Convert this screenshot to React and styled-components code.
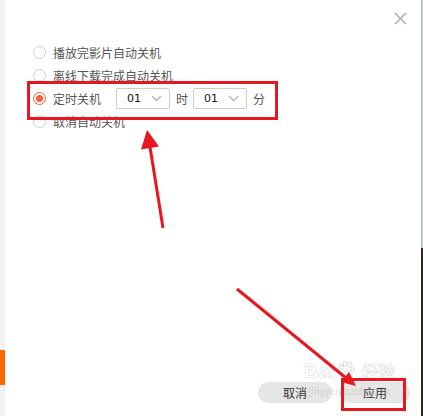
import styled, { createGlobalStyle } from 'styled-components';

const GlobalStyle = createGlobalStyle`
    html, body {
        margin: 0;
        padding: 0;
        background: #fff;
    }
    body {
        font-family: "Noto Sans CJK SC", "Liberation Sans", sans-serif;
        font-size: 12px;
    }
`;

const options = [
    { id: 'movie', label: '播放完影片自动关机' },
    { id: 'download', label: '离线下载完成自动关机' },
    { id: 'timer', label: '定时关机', checked: true, timer: true },
    { id: 'cancel', label: '取消自动关机' },
];

const Chevron = () => (
    <svg width="11" height="7" viewBox="0 0 11 7">
        <path d="M1 1l4.5 4.5L10 1" fill="none" stroke="#b4b4b4" strokeWidth="1.4" />
    </svg>
);

const TimeSelect = ({ value }) => (
    <Select>
        <span>{value}</span>
        <Chevron />
    </Select>
);

// faint baidu paw in the watermark
const Paw = () => (
    <svg width="18" height="20" viewBox="0 0 18 20">
        <g fill="none" stroke="rgba(150,150,150,0.35)" strokeWidth="1">
            <ellipse cx="4" cy="6" rx="2" ry="2.6" />
            <ellipse cx="8" cy="3" rx="2" ry="2.6" />
            <ellipse cx="13" cy="4" rx="2" ry="2.6" />
            <ellipse cx="15.5" cy="9" rx="1.8" ry="2.3" />
            <path d="M4 17c0-4 3-7 5.5-7S15 13 15 17c0 2-3 2-5.5 1.2C7 19 4 19 4 17z" />
        </g>
    </svg>
);

const App = () => (
    <Page>
        <GlobalStyle />
        <Sidebar>
            <SideTab />
        </Sidebar>
        <Dialog>
            <Header>
                <CloseButton aria-label="close">
                    <svg width="13" height="13" viewBox="0 0 13 13">
                        <path d="M1 1l11 11M12 1L1 12" stroke="#b0b0b0" strokeWidth="1.6" />
                    </svg>
                </CloseButton>
            </Header>
            <OptionList>
                {options.map((opt) => (
                    <Option key={opt.id}>
                        <Radio $checked={opt.checked} />
                        <Label>{opt.label}</Label>
                        {opt.timer && (
                            <TimerFields>
                                <TimeSelect value="01" />
                                <Unit>时</Unit>
                                <TimeSelect value="01" />
                                <Unit>分</Unit>
                            </TimerFields>
                        )}
                    </Option>
                ))}
            </OptionList>
            <Footer>
                <Button $w={74}>取消</Button>
                <Button $w={70}>应用</Button>
            </Footer>
        </Dialog>
        <EdgeStrip />

        <Watermark>
            <div className="brand">
                <span>Bai</span>
                <Paw />
                <span className="cn">经验</span>
            </div>
            <span className="url">jingyan.baidu.com</span>
        </Watermark>
        <MarkBox $x={27} $y={81} $w={251} $h={39} />
        <MarkBox $x={341} $y={378} $w={65} $h={33} />
        <ArrowLayer width="423" height="416" viewBox="0 0 423 416">
            <line x1="163" y1="228" x2="150" y2="147" stroke="#e8161f" strokeWidth="3" />
            <polygon points="147,130 141,149.5 159,146.5" fill="#e8161f" />
            <line x1="237" y1="289" x2="346" y2="378" stroke="#e8161f" strokeWidth="3" />
            <polygon points="356,386 341,382 349,372" fill="#e8161f" />
        </ArrowLayer>
    </Page>
);

export default App;

const Page = styled.div`
    position: relative;
    width: 423px;
    height: 416px;
    display: flex;
    overflow: hidden;
    background: #fff;
`;

const Sidebar = styled.div`
    width: 5px;
    background: #f2f2f2;
    display: flex;
    flex-direction: column;
    justify-content: flex-end;
    padding-bottom: 31px;
    box-sizing: border-box;
`;

const SideTab = styled.div`
    height: 35px;
    background: #ff6600;
`;

const EdgeStrip = styled.div`
    width: 2px;
    background: linear-gradient(#b9c6c2 0, #b9c6c2 248px, #2b2620 248px);
`;

const Dialog = styled.div`
    flex: 1;
    display: flex;
    flex-direction: column;
`;

const Header = styled.div`
    height: 40px;
    display: flex;
    justify-content: flex-end;
    padding: 11px 13px 0 0;
    box-sizing: border-box;
`;

const CloseButton = styled.button`
    width: 15px;
    height: 15px;
    padding: 0;
    border: none;
    background: none;
    display: flex;
    align-items: center;
    justify-content: center;
`;

const OptionList = styled.div`
    display: flex;
    flex-direction: column;
    padding-left: 28px;
    padding-top: 1px;
`;

const Option = styled.div`
    height: 23px;
    display: flex;
    align-items: center;
`;

const Radio = styled.span`
    width: 13px;
    height: 13px;
    box-sizing: border-box;
    border-radius: 50%;
    border: 1px solid ${(p) => (p.$checked ? '#f0603f' : '#cfcfcf')};
    display: flex;
    align-items: center;
    justify-content: center;
    margin-right: 7px;
    &::after {
        content: '';
        width: 7px;
        height: 7px;
        border-radius: 50%;
        background: #f0603f;
        display: ${(p) => (p.$checked ? 'block' : 'none')};
    }
`;

const Label = styled.span`
    color: #555;
    font-size: 12px;
    line-height: 16px;
`;

const TimerFields = styled.div`
    display: flex;
    align-items: center;
    margin-left: 15px;
`;

const Select = styled.div`
    width: 54px;
    height: 21px;
    box-sizing: border-box;
    border: 1px solid #cccccc;
    border-radius: 2px;
    display: flex;
    align-items: center;
    justify-content: space-between;
    padding: 0 7px 0 10px;
    span {
        font-family: "DejaVu Sans", sans-serif;
        font-size: 11px;
        color: #111;
    }
`;

const Unit = styled.span`
    color: #555;
    font-size: 12px;
    margin: 0 5px 0 6px;
`;

const Footer = styled.div`
    margin-top: auto;
    display: flex;
    justify-content: flex-end;
    gap: 8px;
    padding: 0 11px 13px 0;
`;

const Button = styled.button`
    width: ${(p) => p.$w}px;
    height: 21px;
    border: none;
    border-radius: 11px;
    background: #e6e6e6;
    color: #333;
    font-family: "Noto Sans CJK SC", sans-serif;
    font-size: 12px;
    padding: 0;
`;

const MarkBox = styled.div`
    position: absolute;
    left: ${(p) => p.$x}px;
    top: ${(p) => p.$y}px;
    width: ${(p) => p.$w}px;
    height: ${(p) => p.$h}px;
    box-sizing: border-box;
    border: 3px solid #e8161f;
`;

const ArrowLayer = styled.svg`
    position: absolute;
    left: 0;
    top: 0;
    pointer-events: none;
`;

const Watermark = styled.div`
    position: absolute;
    left: 304px;
    top: 360px;
    display: flex;
    flex-direction: column;
    align-items: center;
    pointer-events: none;
    .brand {
        display: flex;
        align-items: center;
        gap: 2px;
        font-family: "Liberation Sans", "Noto Sans CJK SC", sans-serif;
        font-weight: bold;
        font-size: 20px;
        line-height: 22px;
        color: rgba(255, 255, 255, 0.6);
        -webkit-text-stroke: 0.6px rgba(150, 150, 150, 0.35);
    }
    .cn {
        font-family: "Noto Sans CJK SC", sans-serif;
        font-size: 17px;
        margin-left: 4px;
    }
    .url {
        font-family: "Liberation Sans", sans-serif;
        font-size: 10px;
        line-height: 12px;
        margin-top: 4px;
        color: rgba(170, 170, 170, 0.35);
    }
`;
